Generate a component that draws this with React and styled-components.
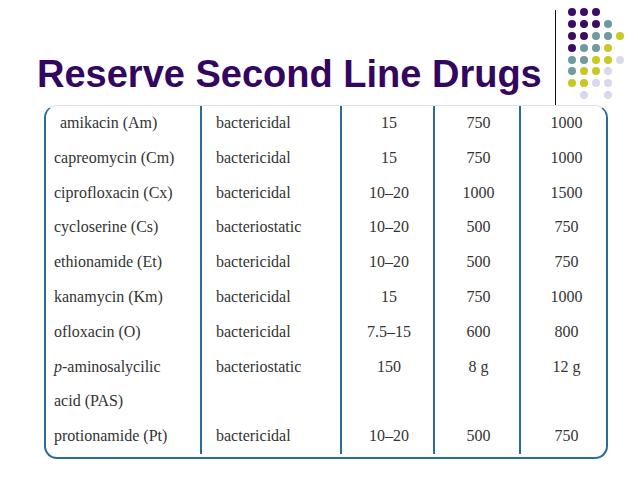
import React from 'react';
import styled, { createGlobalStyle } from 'styled-components';

const GlobalStyle = createGlobalStyle`
  body {
    margin: 0;
    background: #fff;
  }
`;

const Slide = styled.div`
  width: 638px;
  height: 479px;
  background: #fff;
  overflow: hidden;
`;

const Header = styled.div`
  display: flex;
  align-items: flex-start;
  height: 105px;
`;

const Title = styled.h1`
  width: 518px;
  margin: 55.5px 0 0;
  padding-left: 37px;
  font-family: "Liberation Sans", Arial, sans-serif;
  font-weight: bold;
  font-size: 38px;
  line-height: 36px;
  color: #33075f;
  white-space: nowrap;
`;

const Rule = styled.div`
  width: 1px;
  height: 95px;
  margin-top: 10px;
  background: #111;
`;

const Dots = styled.div`
  display: grid;
  grid-template-columns: repeat(5, 8px);
  grid-auto-rows: 8px;
  column-gap: 4px;
  row-gap: 3.9px;
  margin: 8px 0 0 12px;
`;

const Dot = styled.span`
  width: 8px;
  height: 8px;
  border-radius: 50%;
  background: ${p => p.$color || 'transparent'};
`;

const Table = styled.div`
  margin-left: 44px;
  width: 564px;
  box-sizing: border-box;
  border: 2px solid #2c6c9b;
  border-top: 1px solid #d9e3ec;
  border-radius: 13px;
  padding-bottom: 3px;
  font-family: "Liberation Serif", "Times New Roman", serif;
  font-size: 16px;
  color: #333;
`;

const Row = styled.div`
  display: grid;
  grid-template-columns: 154px 140px 93px 86px 87px;
`;

const Cell = styled.div`
  box-sizing: border-box;
  line-height: 34.8px;
  white-space: nowrap;
  padding-left: ${p => p.$pad || 0}px;
  text-align: ${p => (p.$center ? 'center' : 'left')};
  border-left: ${p => (p.$first ? 'none' : '2px solid #2c6c9b')};
`;

const P = {
  p: '#3a0c63',
  t: '#6f9b9c',
  y: '#c9c722',
  l: '#d9d9eb',
};

const dotRows = [
  'ppp..',
  'pppt.',
  'pptty',
  'ptty.',
  'ttyyl',
  'tyyl.',
  'yyll.',
  '.l.l.',
];

const drugs = [
  ['amikacin (Am)', 'bactericidal', '15', '750', '1000'],
  ['capreomycin (Cm)', 'bactericidal', '15', '750', '1000'],
  ['ciprofloxacin (Cx)', 'bactericidal', '10–20', '1000', '1500'],
  ['cycloserine (Cs)', 'bacteriostatic', '10–20', '500', '750'],
  ['ethionamide (Et)', 'bactericidal', '10–20', '500', '750'],
  ['kanamycin (Km)', 'bactericidal', '15', '750', '1000'],
  ['ofloxacin (O)', 'bactericidal', '7.5–15', '600', '800'],
  [
    <>
      <i>p</i>-aminosalycilic
      <br />
      acid (PAS)
    </>,
    'bacteriostatic',
    '150',
    '8 g',
    '12 g',
  ],
  ['protionamide (Pt)', 'bactericidal', '10–20', '500', '750'],
];

export default function App() {
  return (
    <Slide>
      <GlobalStyle />
      <Header>
        <Title>Reserve Second Line Drugs</Title>
        <Rule />
        <Dots>
          {dotRows.map((row, r) =>
            row.split('').map((c, i) => <Dot key={r + '-' + i} $color={P[c]} />)
          )}
        </Dots>
      </Header>
      <Table>
        {drugs.map((d, i) => (
          <Row key={i}>
            <Cell $first $pad={i === 0 ? 14 : 8}>{d[0]}</Cell>
            <Cell $pad={14}>{d[1]}</Cell>
            <Cell $center $pad={3}>{d[2]}</Cell>
            <Cell $center $pad={3}>{d[3]}</Cell>
            <Cell $center $pad={6}>{d[4]}</Cell>
          </Row>
        ))}
      </Table>
    </Slide>
  );
}
